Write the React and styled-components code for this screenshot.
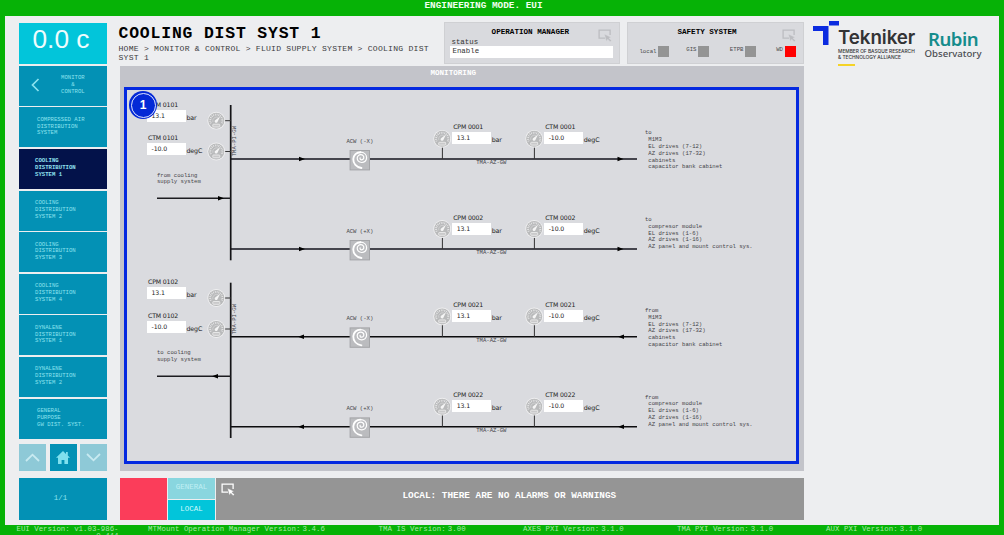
import React from "react";
import styled, { createGlobalStyle, css } from "styled-components";

const GlobalStyle = createGlobalStyle`
  * { box-sizing: border-box; }
  html, body { margin: 0; padding: 0; overflow: hidden; }
`;

const mono = css`
  font-family: "Liberation Mono", monospace;
`;
const sans = css`
  font-family: "DejaVu Sans", sans-serif;
`;

const Frame = styled.div`
  ${mono}
  width: 1004px;
  height: 535px;
  overflow: hidden;
  background: #06b206;
  display: grid;
  grid-template-rows: 16px 509px 10px;
`;

const ModeBar = styled.header`
  padding: 0 37px 0 0;
  text-align: center;
  color: #f0fff0;
  font-size: 9.4px;
  font-weight: 700;
  line-height: 12px;
`;

const Screen = styled.div`
  margin: 0 5px 0 5px;
  background: #edeef0;
  display: grid;
  grid-template-columns: 88px 684px 1fr;
  column-gap: 12.5px;
  padding-left: 14px;
`;

/* ---------- sidebar ---------- */

const Sidebar = styled.nav`
  display: flex;
  flex-direction: column;
  padding-top: 7px;
`;

const Temperature = styled.div`
  height: 41px;
  flex: none;
  background: #02c5da;
  color: #effcfd;
  font: 26.3px/33px "Liberation Sans", sans-serif;
  text-align: center;
  padding-right: 4px;
`;

const MenuList = styled.div`
  display: flex;
  flex-direction: column;
  gap: 1.6px;
  padding-top: 1.9px;
`;

const MenuButton = styled.button`
  ${mono}
  height: 40px;
  width: 88px;
  border: 0;
  padding: 0 0 1px ${(p) => p.$indent || 16}px;
  display: flex;
  align-items: center;
  justify-content: flex-start;
  gap: 21px;
  text-align: ${(p) => (p.$center ? "center" : "left")};
  white-space: pre;
  font-size: 5.67px;
  font-weight: ${(p) => (p.$active ? 700 : 400)};
  line-height: 6.75px;
  background: ${(p) => (p.$active ? "#03124a" : "#0391b5")};
  color: ${(p) => (p.$active ? "#8fe0ef" : "#8be2ee")};
`;

const PagerRow = styled.div`
  display: flex;
  justify-content: space-between;
  margin-top: 5px;
`;

const PagerButton = styled.button`
  width: 27px;
  height: 27px;
  border: 0;
  padding: 0;
  display: grid;
  place-items: center;
  background: ${(p) => (p.$home ? "#0391b5" : "#8ec9d7")};
`;

const PageCount = styled.div`
  margin-top: 7px;
  height: 42px;
  background: #0391b5;
  color: #8be2ee;
  font-size: 7.5px;
  line-height: 40px;
  text-align: center;
  padding-right: 5px;
`;

/* ---------- main column ---------- */

const Main = styled.main`
  display: flex;
  flex-direction: column;
`;

const TopRow = styled.div`
  display: flex;
  height: 50px;
  padding-top: 6px;
`;

const Heading = styled.div`
  flex: 1;
  min-width: 0;
  margin-left: -1px;
  color: #3c3c3e;
`;

const Title = styled.h1`
  margin: 2px 0 0;
  color: #000;
  font-size: 16.4px;
  letter-spacing: 0.84px;
  line-height: 20px;
  white-space: nowrap;
`;

const Crumbs = styled.div`
  font-size: 8.1px;
  letter-spacing: 0.23px;
  line-height: 8.6px;
  white-space: pre;
  padding-top: 1px;
`;

const StatusPanel = styled.section`
  width: 176.5px;
  height: 42px;
  margin-left: 7px;
  flex: none;
  background: #d9dade;
  border: 1px solid #cfd0d3;
`;

const PanelHead = styled.div`
  display: grid;
  grid-template-columns: 1fr 21px;
  height: 15px;
`;

const PanelTitle = styled.h2`
  margin: 0;
  color: #000;
  font-size: 7.6px;
  line-height: 18px;
  text-align: center;
`;

const PanelIcon = styled.div`
  padding-top: 6px;
  height: 20px;
`;

const StatusLabel = styled.label`
  display: block;
  padding-left: 7px;
  color: #333;
  font-size: 7.4px;
  line-height: 8px;
`;

const StatusValue = styled.div`
  width: 163px;
  height: 11.5px;
  margin: 0 0 0 5.5px;
  padding-left: 2.5px;
  background: #fff;
  color: #333;
  font-size: 7.4px;
  line-height: 10px;
`;

const Lamps = styled.div`
  display: flex;
  justify-content: flex-end;
  gap: 16px;
  padding: 8px 7px 0 0;
`;

const Lamp = styled.div`
  display: flex;
  align-items: flex-start;
  gap: 1.5px;
  width: ${(p) => p.$w}px;
  justify-content: flex-end;
  color: #4a4a4c;
  font-size: 5.7px;
  line-height: ${(p) => (p.$low ? 12 : 8)}px;

  &::after {
    content: "";
    width: 11px;
    height: 11px;
    background: ${(p) => (p.$on ? "#ff0000" : "#949494")};
  }
`;

const Monitor = styled.section`
  height: 405px;
  background: #c3c4ca;
  padding: 0 5px 0 4.5px;
`;

const MonitorTitle = styled.h3`
  margin: 0;
  height: 21px;
  padding-right: 16px;
  color: #fff;
  font-size: 7.6px;
  line-height: 15px;
  text-align: center;
`;

const Canvas = styled.div`
  position: relative;
  width: 675px;
  height: 377px;
  border: 3px solid #0429e0;
  background: #dadbdf;
`;

const Pipes = styled.svg`
  position: absolute;
  left: 0;
  top: 0;
`;

const Node = styled.div`
  position: absolute;
  left: ${(p) => p.$x}px;
  top: ${(p) => p.$y}px;
`;

const ReadingBox = styled(Node)`
  ${sans}
  display: grid;
  grid-template-columns: 38.5px auto;
  grid-template-rows: 10px 12px;
  color: #222;
  white-space: nowrap;
`;

const ReadingLabel = styled.div`
  grid-column: 1 / 3;
  padding-left: 1px;
  font-size: 6.2px;
  letter-spacing: -0.14px;
  line-height: 10px;
`;

const ReadingValue = styled.div`
  background: #fff;
  padding-left: 4.5px;
  font-size: 6.2px;
  letter-spacing: -0.1px;
  line-height: 11px;
`;

const ReadingUnit = styled.div`
  padding-left: 1px;
  font-size: 6.3px;
  letter-spacing: -0.14px;
  line-height: 15.5px;
`;

const Caption = styled(Node)`
  color: #444448;
  font-size: 5.62px;
  line-height: 6.8px;
  white-space: pre;
  ${(p) => p.$vertical && "writing-mode: vertical-rl; transform: rotate(180deg);"}
`;

const Badge = styled(Node)`
  width: 28px;
  height: 28px;
  border-radius: 50%;
  background: #0429d6;
  padding: 1.5px;

  span {
    display: block;
    height: 25px;
    border: 1px solid #dfe5ff;
    border-radius: 50%;
    color: #fff;
    font: 700 12px/23px "Liberation Sans", sans-serif;
    text-align: center;
  }
`;

/* ---------- alarm strip ---------- */

const AlarmStrip = styled.div`
  display: grid;
  grid-template-columns: 47.5px 47.5px 1fr;
  column-gap: 0.8px;
  height: 42px;
  margin-top: 7px;
`;

const AlarmLight = styled.div`
  background: #fb3d5a;
`;

const Tabs = styled.div`
  display: grid;
  grid-template-rows: 20.5px 20.5px;
  row-gap: 1px;
`;

const Tab = styled.button`
  ${mono}
  border: 0;
  padding: 0 0 2px;
  background: ${(p) => (p.$selected ? "#02c5da" : "#89d6df")};
  color: ${(p) => (p.$selected ? "#d4fafc" : "#c0eff4")};
  font-size: 7.5px;
  font-weight: 400;
`;

const AlarmMessage = styled.div`
  display: grid;
  grid-template-columns: 20px 1fr;
  background: #959595;
  color: #fff;
  font-size: 9.4px;
  font-weight: 700;
  line-height: 35px;
  text-align: center;
  padding-left: 5px;

  svg { margin-top: 5px; }
  p { margin: 0; padding-right: 26px; }
`;

/* ---------- logos ---------- */

const Logos = styled.aside`
  display: flex;
  margin-left: -3px;
  padding-top: 5px;
`;

const TeknikerMark = styled.svg`
  flex: none;
  width: 26px;
  height: 25px;
`;

const Tekniker = styled.div`
  width: 86px;
  font-family: Inter, sans-serif;
  color: #333335;
  white-space: nowrap;
  padding-top: 6px;
  margin-left: -1px;

  strong {
    display: block;
    font-size: 18.8px;
    font-weight: 600;
    letter-spacing: -0.1px;
    line-height: 22px;
  }
  small {
    display: block;
    font-size: 4.82px;
    font-weight: 500;
    line-height: 5.8px;
    white-space: pre;
  }
  i {
    display: block;
    width: 17px;
    height: 2px;
    margin-top: 3px;
    background: #f5d327;
  }
`;

const Rubin = styled.div`
  font-family: "Noto Sans", sans-serif;
  color: #4a4c50;
  padding-top: 9px;
  width: 58px;
  text-align: center;

  strong {
    display: block;
    color: #158c8c;
    font-size: 18.6px;
    font-weight: 600;
    letter-spacing: -0.5px;
    line-height: 18px;
  }
  small {
    display: block;
    font-size: 9.6px;
    font-weight: 500;
    line-height: 11px;
  }
`;

/* ---------- version footer ---------- */

const Versions = styled.footer`
  display: grid;
  grid-template-columns: 102px 209px 122px 131.5px 131.5px auto;
  padding-left: 16.5px;
  color: #a5eba5;
  font-size: 7.4px;
  line-height: 7px;
  padding-top: 0.5px;
  height: 10px;
  overflow: hidden;
`;

const Version = styled.div`
  display: flex;
  gap: 2px;
  white-space: nowrap;
  padding-left: ${(p) => p.$pad || 0}px;
  letter-spacing: 0.05px;
`;

const EuiVersion = styled.div`
  text-align: right;
  white-space: pre;
`;

const PointerIcon = ({ color, edge }) => (
  <svg width="14" height="14" viewBox="0 0 14 14">
    <path d="M7 9.2H1.1V1.1h11v5" fill="none" stroke={color} strokeWidth="1.3" />
    <path d="M6.5 5.2l1.8 7 1.5-2 2.4 2.6 1.2-1.2-2.5-2.4 2-1z" fill={color} stroke={edge} strokeWidth="0.4" />
  </svg>
);

const Gauge = ({ x, y }) => (
  <g transform={`translate(${x} ${y})`}>
    <circle r="8.9" fill="#f0f0f1" />
    <circle r="8" fill="#b9babb" />
    <path
      d="M-5.5 2.6A6.1 6.1 0 1 1 5.5 2.6"
      fill="none"
      stroke="#e9e9ea"
      strokeWidth="1.9"
      strokeDasharray="0.8 1"
    />
    <path d="M-3.4 1.4A3.9 3.9 0 0 1 2-3.3" fill="none" stroke="#dcdcdd" strokeWidth="0.6" />
    <path d="M3.8-4.2L1.3 1A1.5 1.5 0 1 1-.8-.8z" fill="#f5f5f5" />
    <rect x="-3.5" y="3.5" width="7" height="2.8" rx="0.7" fill="#c9c9ca" stroke="#f0f0f0" strokeWidth="0.8" />
  </g>
);

const Wrap = ({ x, y }) => (
  <g transform={`translate(${x} ${y})`} fill="none" stroke="#fff" strokeLinecap="round">
    <rect x="0.5" y="0.5" width="19.4" height="19.4" fill="#bbbcbf" stroke="#a4a5a8" />
    <path d="M11.8 18C6.8 17 3.5 13.4 3.7 9 3.9 5 7 2.2 10.8 2.2" strokeWidth="1.9" />
    <path
      d="M10.8 2.2C14.6 2.2 17 4.7 17 7.7 17 10.6 14.8 12.6 12 12.5 9.4 12.4 7.5 10.5 7.6 8.1 7.7 6 9.4 4.6 11.3 4.7 13.1 4.8 14.3 6.1 14.2 7.6 14.1 9 13 9.9 11.8 9.8 10.8 9.7 10.2 8.8 10.5 7.9"
      strokeWidth="1.2"
    />
  </g>
);

const Arrow = ({ x, y, left }) => (
  <path d={left ? `M${x} ${y}l6-2.3v4.6z` : `M${x} ${y}l-6-2.3v4.6z`} fill="#000" />
);

const Reading = ({ x, y, label, value, unit }) => (
  <ReadingBox $x={x} $y={y}>
    <ReadingLabel>{label}</ReadingLabel>
    <ReadingValue>{value}</ReadingValue>
    <ReadingUnit>{unit}</ReadingUnit>
  </ReadingBox>
);

const menu = [
  { text: "COMPRESSED AIR\nDISTRIBUTION\nSYSTEM", indent: 18 },
  { text: "COOLING\nDISTRIBUTION\nSYSTEM 1", active: true },
  { text: "COOLING\nDISTRIBUTION\nSYSTEM 2" },
  { text: "COOLING\nDISTRIBUTION\nSYSTEM 3" },
  { text: "COOLING\nDISTRIBUTION\nSYSTEM 4" },
  { text: "DYNALENE\nDISTRIBUTION\nSYSTEM 1" },
  { text: "DYNALENE\nDISTRIBUTION\nSYSTEM 2" },
  { text: "GENERAL\nPURPOSE\nGW DIST. SYST.", indent: 18 },
];

const mirrorList = "\n M1M3\n EL drives (7-12)\n AZ drives (17-32)\n cabinets\n capacitor bank cabinet";
const moduleList = "\n compresor module\n EL drives (1-6)\n AZ drives (1-16)\n AZ panel and mount control sys.";

const branches = [
  { y: 69, id: "0001", axis: "-X", wrapY: 60, gaugeY: 48.8, readY: 32, text: "to" + mirrorList, textY: 40.4 },
  { y: 159, id: "0002", axis: "+X", wrapY: 150, gaugeY: 139, readY: 122.6, text: "to" + moduleList, textY: 127 },
  { y: 246.8, id: "0021", axis: "-X", wrapY: 237.4, gaugeY: 226.4, readY: 209.7, text: "from" + mirrorList, textY: 218, back: true },
  { y: 336.7, id: "0022", axis: "+X", wrapY: 327.4, gaugeY: 316.7, readY: 300, text: "from" + moduleList, textY: 304.6, back: true },
];

const manifolds = [
  { id: "0101", top: 15, gauges: [30.7, 61.5], reads: [9.8, 43.3], note: "from cooling\nsupply system", noteY: 82.6, feedY: 108.3, tagY: 36 },
  { id: "0102", top: 192.7, gauges: [208, 239], reads: [187.2, 221], note: "to cooling\nsupply system", noteY: 260.2, feedY: 286.2, tagY: 213.5, back: true },
];

export default function App() {
  return (
    <>
      <GlobalStyle />
      <Frame>
        <ModeBar>ENGINEERING MODE. EUI</ModeBar>

        <Screen>
          <Sidebar>
            <Temperature>0.0 c</Temperature>
            <MenuList>
              <MenuButton $indent={12} $center>
                <svg width="9" height="14" viewBox="0 0 9 14">
                  <path d="M7.5 1L1.5 7l6 6" fill="none" stroke="#8be2ee" strokeWidth="1.7" />
                </svg>
                {"MONITOR\n&\nCONTROL"}
              </MenuButton>
              {menu.map((m) => (
                <MenuButton key={m.text} $indent={m.indent} $active={m.active}>
                  {m.text}
                </MenuButton>
              ))}
            </MenuList>
            <PagerRow>
              <PagerButton>
                <svg width="15" height="9" viewBox="0 0 15 9">
                  <path d="M1 8l6.5-6.3L14 8" fill="none" stroke="#c8eaf1" strokeWidth="1.8" />
                </svg>
              </PagerButton>
              <PagerButton $home>
                <svg width="14" height="13" viewBox="0 0 14 13">
                  <path d="M7 0L0 6.8h2V13h3.6V9h2.8v4H12V6.8h2l-2.2-2.2V1H10v1.9z" fill="#7fe0ee" />
                </svg>
              </PagerButton>
              <PagerButton>
                <svg width="15" height="9" viewBox="0 0 15 9">
                  <path d="M1 1l6.5 6.3L14 1" fill="none" stroke="#c8eaf1" strokeWidth="1.8" />
                </svg>
              </PagerButton>
            </PagerRow>
            <PageCount>1/1</PageCount>
          </Sidebar>

          <Main>
            <TopRow>
              <Heading>
                <Title>COOLING DIST SYST 1</Title>
                <Crumbs>{"HOME > MONITOR & CONTROL > FLUID SUPPLY SYSTEM > COOLING DIST\nSYST 1"}</Crumbs>
              </Heading>
              <StatusPanel>
                <PanelHead>
                  <PanelTitle>&nbsp;&nbsp;&nbsp;&nbsp;OPERATION MANAGER</PanelTitle>
                  <PanelIcon><PointerIcon color="#bcbdc1" edge="#d9dade" /></PanelIcon>
                </PanelHead>
                <StatusLabel>status</StatusLabel>
                <StatusValue>Enable</StatusValue>
              </StatusPanel>
              <StatusPanel>
                <PanelHead>
                  <PanelTitle>&nbsp;SAFETY SYSTEM</PanelTitle>
                  <PanelIcon><PointerIcon color="#bcbdc1" edge="#d9dade" /></PanelIcon>
                </PanelHead>
                <Lamps>
                  <Lamp $w={30} $low>local</Lamp>
                  <Lamp $w={24}>GIS</Lamp>
                  <Lamp $w={31}>ETPB</Lamp>
                  <Lamp $w={23.5} $on>WD</Lamp>
                </Lamps>
              </StatusPanel>
            </TopRow>

            <Monitor>
              <MonitorTitle>MONITORING</MonitorTitle>
              <Canvas>
                <Pipes width="669" height="371" viewBox="0 0 669 371">
                  {branches.map((b) => (
                    <g key={b.id}>
                      <path d={`M104 ${b.y}H510`} stroke={b.back ? "#0c0c0e" : "#45454d"} strokeWidth={b.back ? 1.5 : 2} />
                      <path d={`M315.4 ${b.gaugeY + 8}V${b.y}M407.4 ${b.gaugeY + 8}V${b.y}`} stroke="#333" strokeWidth="1" />
                      <Arrow x={b.back ? 171 : 178} y={b.y} left={b.back} />
                      <Arrow x={b.back ? 491 : 496.5} y={b.y} left={b.back} />
                      <Gauge x={315.2} y={b.gaugeY} />
                      <Gauge x={407.2} y={b.gaugeY} />
                      <Wrap x={222.6} y={b.wrapY} />
                    </g>
                  ))}
                  {manifolds.map((m) => (
                    <g key={m.id}>
                      <path d={`M103.7 ${m.top}v155.3`} stroke="#141417" strokeWidth="1.7" />
                      <path d={`M30 ${m.feedY}H104`} stroke="#1c1c20" strokeWidth="1.6" />
                      <Arrow x={m.back ? 85 : 97} y={m.feedY} left={m.back} />
                      {m.gauges.map((y) => (
                        <g key={y}>
                          <path d={`M97 ${y}h7`} stroke="#333" strokeWidth="1" />
                          <Gauge x={89.3} y={y} />
                        </g>
                      ))}
                    </g>
                  ))}
                </Pipes>

                {branches.map((b) => (
                  <React.Fragment key={b.id}>
                    <Caption $x={219.4} $y={b.wrapY - 11}>{`ACW (${b.axis})`}</Caption>
                    <Reading x={325.2} y={b.readY} label={`CPM ${b.id}`} value="13.1" unit="bar" />
                    <Reading x={417.2} y={b.readY} label={`CTM ${b.id}`} value="-10.0" unit="degC" />
                    <Caption $x={349.2} $y={b.y + 1.4}>TMA-AZ-GW</Caption>
                    <Caption $x={518} $y={b.textY}>{b.text}</Caption>
                  </React.Fragment>
                ))}
                {manifolds.map((m) => (
                  <React.Fragment key={m.id}>
                    <Reading x={20} y={m.reads[0]} label={`CPM ${m.id}`} value="13.1" unit="bar" />
                    <Reading x={20} y={m.reads[1]} label={`CTM ${m.id}`} value="-10.0" unit="degC" />
                    <Caption $x={30} $y={m.noteY}>{m.note}</Caption>
                    <Caption $x={105.4} $y={m.tagY} $vertical>TMA-PI-GW</Caption>
                  </React.Fragment>
                ))}
                <Badge $x={2} $y={1.3}><span>1</span></Badge>
              </Canvas>
            </Monitor>

            <AlarmStrip>
              <AlarmLight />
              <Tabs>
                <Tab>GENERAL</Tab>
                <Tab $selected>LOCAL</Tab>
              </Tabs>
              <AlarmMessage>
                <PointerIcon color="#fff" edge="#959595" />
                <p>LOCAL: THERE ARE NO ALARMS OR WARNINGS</p>
              </AlarmMessage>
            </AlarmStrip>
          </Main>

          <Logos>
            <TeknikerMark viewBox="0 0 26 25">
              <path d="M0 5h15.5v19H10V10H0z M16 0h10v4.5H16z" fill="#0b2be0" />
            </TeknikerMark>
            <Tekniker>
              <strong>Tekniker</strong>
              <small>{"MEMBER OF BASQUE RESEARCH\n& TECHNOLOGY ALLIANCE"}</small>
              <i />
            </Tekniker>
            <Rubin>
              <strong>Rubin</strong>
              <small>Observatory</small>
            </Rubin>
          </Logos>
        </Screen>

        <Versions>
          <EuiVersion>{"EUI Version: v1.03-986-\n0.444"}</EuiVersion>
          <Version $pad={29.5}><span>MTMount Operation Manager Version:</span><span>3.4.6</span></Version>
          <Version $pad={51}><span>TMA IS Version:</span><span>3.00</span></Version>
          <Version $pad={73.5}><span>AXES PXI Version:</span><span>3.1.0</span></Version>
          <Version $pad={96}><span>TMA PXI Version:</span><span>3.1.0</span></Version>
          <Version $pad={113.5}><span>AUX PXI Version:</span><span>3.1.0</span></Version>
        </Versions>
      </Frame>
    </>
  );
}
